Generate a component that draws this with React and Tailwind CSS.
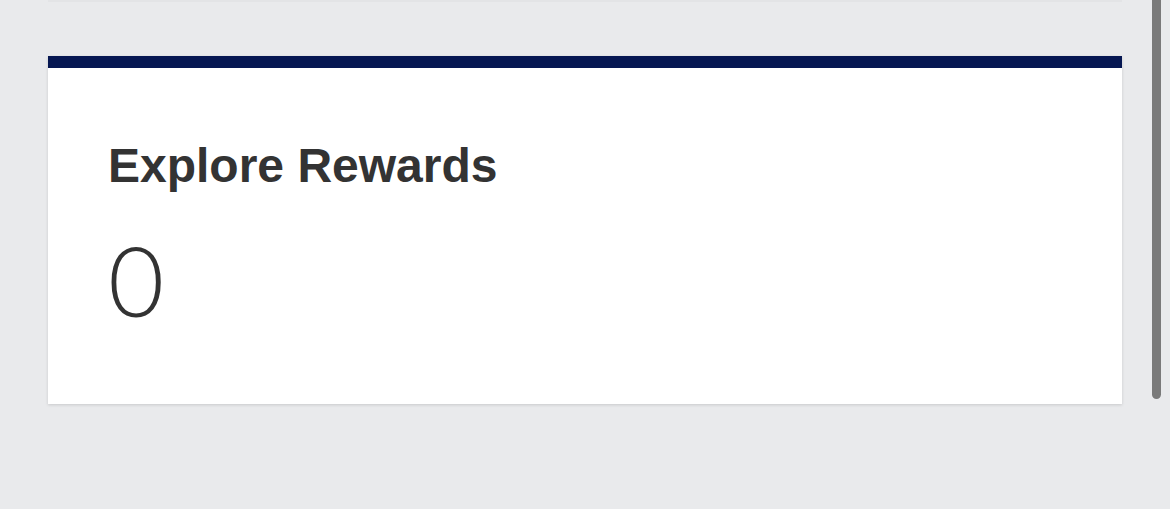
import React from "react";

function RewardsCard({ title, count }) {
  return (
    <div className="bg-white shadow-[0_1px_3px_rgba(0,0,0,0.14)]">
      <div className="h-[12px] bg-[#061752]" />
      <div className="pl-[60px] pt-[70px] pb-[76px]">
        <h2 className="text-[48px] leading-[56px] font-bold text-[#333333] font-['Liberation_Sans',Arial,sans-serif]">
          {title}
        </h2>
        <div className="mt-[37px] text-[97px] leading-none font-light text-[#333333] font-['Lato',sans-serif]">
          {count}
        </div>
      </div>
    </div>
  );
}

export default function App() {
  return (
    <div className="relative w-[1170px] h-[509px] bg-[#e9eaec] overflow-hidden">
      {/* edge of the card above */}
      <div className="ml-[48px] w-[1074px] h-[2px] bg-[#e3e4e6]" />
      <div className="ml-[48px] mt-[54px] w-[1074px]">
        <RewardsCard title="Explore Rewards" count={0} />
      </div>
      {/* overlay scrollbar */}
      <div className="absolute left-[1152px] top-0 w-[9px] h-[399px] rounded-b-full bg-[#7a7a7a]" />
    </div>
  );
}
